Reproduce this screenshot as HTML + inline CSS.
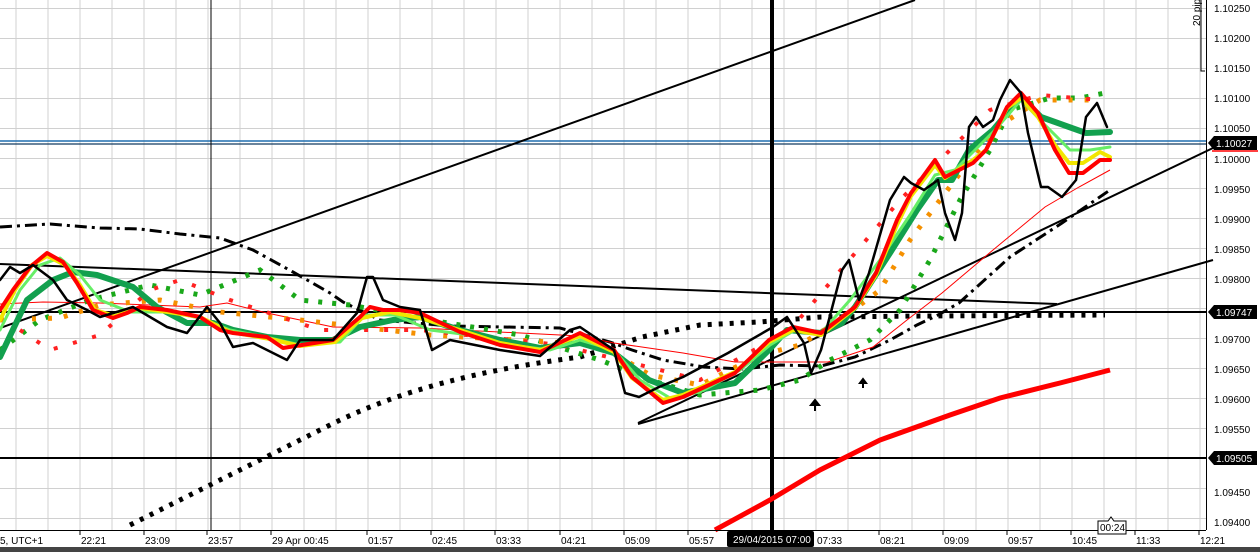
<!DOCTYPE html>
<html><head><meta charset="utf-8"><style>
html,body{margin:0;padding:0;background:#fff;width:1260px;height:552px;overflow:hidden;font-family:"Liberation Sans",sans-serif}
svg{display:block}
text{font-family:"Liberation Sans",sans-serif;font-size:10px}
</style></head><body>
<svg width="1260" height="552" viewBox="0 0 1260 552">
<rect width="1260" height="552" fill="#fff"/>
<g stroke="#d0d0d0" stroke-width="1">
<path d="M16 0V530M48 0V530M80 0V530M112 0V530M144 0V530M176 0V530M208 0V530M240 0V530M272 0V530M304 0V530M336 0V530M368 0V530M400 0V530M432 0V530M464 0V530M496 0V530M528 0V530M560 0V530M592 0V530M624 0V530M656 0V530M688 0V530M720 0V530M752 0V530M784 0V530M816 0V530M848 0V530M880 0V530M912 0V530M944 0V530M976 0V530M1008 0V530M1040 0V530M1072 0V530M1104 0V530M1136 0V530M1168 0V530M1200 0V530"/>
<path d="M0 8.5H1206M0 38.5H1206M0 68.5H1206M0 98.5H1206M0 128.5H1206M0 158.5H1206M0 188.5H1206M0 218.5H1206M0 248.5H1206M0 278.5H1206M0 308.5H1206M0 338.5H1206M0 368.5H1206M0 398.5H1206M0 428.5H1206M0 458.5H1206M0 488.5H1206M0 518.5H1206"/>
</g>
<line x1="0" y1="141" x2="1206" y2="141" stroke="#1f6fb0" stroke-width="1.5"/>
<line x1="0" y1="144" x2="1206" y2="144" stroke="#103a60" stroke-width="1.2"/>
<line x1="0" y1="312" x2="1206" y2="312" stroke="#000" stroke-width="2"/>
<line x1="0" y1="458" x2="1206" y2="458" stroke="#000" stroke-width="2"/>
<line x1="211" y1="0" x2="211" y2="530" stroke="#000" stroke-width="1"/>
<line x1="772" y1="0" x2="772" y2="530" stroke="#000" stroke-width="4"/>
<g stroke="#000" stroke-width="2" fill="none">
<line x1="0" y1="328" x2="915" y2="0"/>
<line x1="0" y1="264" x2="1057" y2="304"/>
<line x1="638" y1="424" x2="1213" y2="260"/>
<line x1="638" y1="423" x2="1213" y2="148"/>
</g>
<path d="M130 525 C200 490 260 460 330 425 S480 370 580 357 L642 337 L700 325 L759 322 L821 317 L924 316 L1105 315" fill="none" stroke="#000" stroke-width="5" stroke-dasharray="4 7"/>
<path d="M0 227 L50 224 L100 228 L140 229 L180 234 L220 238 L253 250 L293 272 L330 293 L343 302 L380 320 L450 326 L560 328 L610 342 L632 350 L663 360 L704 367 L742 369 L780 365 L821 366 L855 357 L890 340 L917 325 L938 315 L959 303 L1010 257 L1062 223 L1110 190" fill="none" stroke="#000" stroke-width="3" stroke-dasharray="12 5 3 5"/>
<path d="M715 530 L770 500 L820 470 L880 440 L950 415 L1000 398 L1060 383 L1110 370" fill="none" stroke="#f00" stroke-width="5"/>
<path d="M0 304 L43 302 L100 303 L200 307 L227 303 L267 313 L333 327 L420 328 L580 336 L614 343 L683 353 L735 362 L828 362 L873 347 L907 320 L942 293 L993 250 L1045 207 L1079 187 L1110 170" fill="none" stroke="#f00" stroke-width="1"/>
<!-- colored dots -->
<path d="M0 350 L40 320 L90 300 L150 285 L200 295 L260 270 L300 300 L350 305 L430 320 L520 335 L600 360 L650 380 L700 395 L760 390 L800 380 L830 360 L870 340 L900 310 L930 260 L960 200 L990 150 L1010 110 L1050 98 L1080 98 L1110 92" fill="none" stroke="#1aa81a" stroke-width="5" stroke-dasharray="4 10"/>
<path d="M0 320 L60 318 L100 305 L160 300 L220 312 L300 320 L430 335 L600 345 L650 375 L700 385 L760 355 L800 345 L840 320 L880 290 L910 240 L940 200 L970 160 L1000 125 L1040 100 L1090 100" fill="none" stroke="#f59000" stroke-width="5" stroke-dasharray="4 12"/>
<path d="M20 330 L50 350 L100 335 L150 290 L180 280 L230 300 L320 330 L420 330 L560 345 L700 380 L790 330 L900 200 L990 110 L1040 95 L1100 100" fill="none" stroke="#f22" stroke-width="4" stroke-dasharray="4 16"/>
<g fill="none" stroke-linejoin="round" stroke-linecap="round">
<path d="M0 357 L27 300 L53 280 L73 272 L97 275 L133 287 L157 307 L187 323 L213 323 L233 330 L267 337 L300 340 L333 340 L360 327 L393 320 L420 317 L460 330 L500 340 L540 348 L580 343 L614 353 L649 380 L683 393 L735 383 L769 350 L787 330 L821 333 L842 323 L855 307 L890 253 L917 210 L938 180 L952 180 L969 150 L993 130 L1021 97 L1041 117 L1069 127 L1086 133 L1110 132" stroke="#12a04e" stroke-width="6"/>
<path d="M0 330 L20 290 L40 265 L60 258 L80 275 L100 300 L130 312 L170 312 L200 318 L230 330 L270 338 L300 345 L340 342 L365 315 L395 315 L430 330 L470 335 L510 345 L550 350 L580 340 L614 350 L640 380 L670 398 L700 392 L740 370 L770 345 L795 330 L821 333 L850 300 L880 260 L910 215 L935 175 L955 170 L975 150 L995 130 L1021 100 L1045 125 L1070 150 L1090 150 L1110 147" stroke="#66ee66" stroke-width="3"/>
<path d="M0 320 L15 290 L32 265 L47 256 L65 265 L80 285 L95 310 L115 316 L140 308 L168 312 L200 317 L230 332 L270 339 L300 346 L335 342 L362 318 L390 312 L420 318 L460 330 L500 343 L540 350 L580 336 L614 352 L632 378 L663 400 L683 395 L735 372 L769 342 L793 330 L821 335 L855 308 L876 275 L897 225 L911 196 L935 165 L945 178 L973 160 L986 150 L1007 108 L1021 98 L1038 117 L1055 145 L1069 163 L1083 163 L1100 152 L1110 157" stroke="#f2e600" stroke-width="4"/>
<path d="M0 310 L13 290 L30 267 L47 253 L63 262 L77 283 L93 310 L113 318 L127 313 L140 307 L167 310 L200 317 L220 330 L233 333 L267 337 L283 348 L333 340 L360 317 L370 307 L383 310 L400 310 L420 313 L460 332 L500 345 L540 352 L580 333 L614 350 L632 377 L663 403 L683 397 L735 373 L769 340 L793 327 L821 333 L855 307 L876 273 L897 220 L911 193 L935 160 L945 177 L959 170 L973 163 L986 150 L1007 107 L1021 93 L1038 113 L1055 150 L1069 173 L1083 173 L1100 160 L1110 160" stroke="#f00" stroke-width="4"/>
<path d="M0 280 L10 267 L20 273 L33 265 L53 280 L67 300 L87 310 L100 317 L133 307 L167 327 L187 333 L207 307 L220 323 L233 347 L253 343 L287 360 L300 340 L333 340 L357 313 L367 277 L373 277 L383 300 L400 307 L420 310 L432 350 L450 340 L475 345 L500 350 L540 356 L570 330 L580 327 L614 350 L625 393 L639 397 L659 387 L683 377 L728 353 L773 327 L787 317 L804 343 L811 373 L821 350 L842 270 L849 260 L859 300 L869 273 L890 200 L904 177 L911 183 L924 190 L938 180 L945 213 L955 240 L962 213 L969 127 L976 117 L983 127 L993 120 L1000 100 L1010 80 L1021 93 L1028 133 L1041 187 L1048 187 L1062 197 L1076 180 L1086 117 L1097 103 L1107 127" stroke="#000" stroke-width="2.5"/>
</g>
<path d="M815 411V404M811 405L815 400L819 405Z" stroke="#000" stroke-width="2" fill="#000"/>
<path d="M863 388V382M860 383L863 379L866 383Z" stroke="#000" stroke-width="2" fill="#000"/>
<line x1="1206.5" y1="0" x2="1206.5" y2="530" stroke="#000"/>
<line x1="0" y1="530.5" x2="1206" y2="530.5" stroke="#000"/>
<rect x="0" y="547" width="1260" height="5" fill="#444"/>
<path d="M1201 0V71H1205" fill="none" stroke="#000"/>
<text transform="translate(1200,26) rotate(-90)" font-size="10">20 pips</text>
<g font-size="10" fill="#000">
<text x="1214" y="12">1.10250</text><text x="1214" y="42">1.10200</text><text x="1214" y="72">1.10150</text><text x="1214" y="102">1.10100</text><text x="1214" y="132">1.10050</text><text x="1214" y="163">1.10000</text><text x="1214" y="193">1.09950</text><text x="1214" y="223">1.09900</text><text x="1214" y="253">1.09850</text><text x="1214" y="283">1.09800</text><text x="1214" y="343">1.09700</text><text x="1214" y="373">1.09650</text><text x="1214" y="403">1.09600</text><text x="1214" y="433">1.09550</text><text x="1214" y="496">1.09450</text><text x="1214" y="526">1.09400</text>
</g>
<g>
<path d="M1208 143L1214 136H1257V150H1214Z" fill="#000"/><line x1="1212" y1="151" x2="1258" y2="151" stroke="#f00" stroke-width="1.5"/>
<text x="1216" y="147" fill="#fff">1.10027</text>
<path d="M1208 312L1214 305H1257V319H1214Z" fill="#000"/><text x="1216" y="316" fill="#fff">1.09747</text>
<path d="M1208 458L1214 451H1257V465H1214Z" fill="#000"/><text x="1216" y="462" fill="#fff">1.09505</text>
</g>
<g font-size="10" fill="#000" stroke="#000">
<path d="M80 530v5M144 530v5M207 530v5M271 530v5M367 530v5M431 530v5M495 530v5M560 530v5M624 530v5M688 530v5M879 530v5M943 530v5M1007 530v5M1071 530v5M1135 530v5M1199 530v5"/>
</g>
<g font-size="10" fill="#000">
<text x="0" y="544">5, UTC+1</text><text x="81" y="544">22:21</text><text x="145" y="544">23:09</text><text x="208" y="544">23:57</text><text x="272" y="544">29 Apr 00:45</text><text x="368" y="544">01:57</text><text x="432" y="544">02:45</text><text x="496" y="544">03:33</text><text x="561" y="544">04:21</text><text x="625" y="544">05:09</text><text x="689" y="544">05:57</text><text x="817" y="544">07:33</text><text x="880" y="544">08:21</text><text x="944" y="544">09:09</text><text x="1008" y="544">09:57</text><text x="1072" y="544">10:45</text><text x="1136" y="544">11:33</text><text x="1200" y="544">12:21</text>
</g>
<rect x="727" y="531" width="87" height="16" rx="2" fill="#000"/>
<text x="733" y="543" fill="#fff">29/04/2015 07:00</text>
<path d="M1098 521H1108L1111 517L1114 521H1126V534H1098Z" fill="#fff" stroke="#000"/>
<text x="1100" y="531">00:24</text>
</svg>
</body></html>
